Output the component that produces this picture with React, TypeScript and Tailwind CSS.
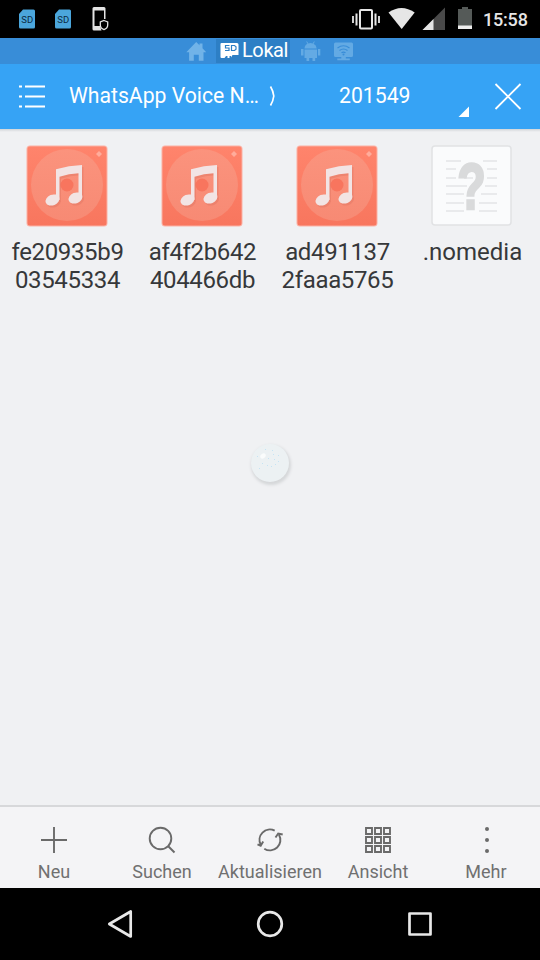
import type { ReactNode } from 'react'

const files = [
  { lines: ['fe20935b9', '03545334'], type: 'audio' },
  { lines: ['af4f2b642', '404466db'], type: 'audio' },
  { lines: ['ad491137', '2faaa5765'], type: 'audio' },
  { lines: ['.nomedia'], type: 'unknown' },
]

function SdCardIcon() {
  return (
    <svg width="18" height="20" viewBox="0 0 18 20">
      <path d="M5 .5h10.500q1.500 0 1.500 1.500v16q0 1.500-1.500 1.500h-13q-1.500 0-1.500-1.500V5z" fill="#4ba6dc" />
      <text x="9.200" y="13.500" textAnchor="middle" fontSize="9.500" fill="#0b2c44">SD</text>
    </svg>
  )
}

function StatusBar() {
  return (
    <div className="flex h-[38px] items-center bg-black pl-[18px] pr-3">
      <SdCardIcon />
      <div className="ml-[18px]">
        <SdCardIcon />
      </div>
      <svg className="ml-[20px]" width="18" height="26" viewBox="92 6 18 26">
        <path d="M94 7h10q1.500 0 1.500 1.500V19h-1.500V10.500H94.500V26H100l1.500 4.500H94q-1.500 0-1.500-1.500V8.500Q92.500 7 94 7z" fill="#e4e4e4" />
        <path d="M104 20.500l3.700 1.500v3c0 2.200-1.500 3.800-3.700 4.600-2.200-.8-3.700-2.400-3.700-4.600v-3z" fill="#000" stroke="#e4e4e4" strokeWidth="1.300" />
      </svg>
      <div className="ml-auto flex items-center">
        <svg width="134" height="30" viewBox="350 4 134 30">
          <g fill="none" stroke="#e6e6e6">
            <rect x="360" y="10" width="12" height="18.500" rx="1" strokeWidth="2" />
            <path d="M356.500 13.500v12M375.500 13.500v12" strokeWidth="2" />
            <path d="M353 16v7M379 16v7" strokeWidth="1.800" />
          </g>
          <path d="M388.500 12.500Q401.500 3.500 414.700 12.500L401.700 29z" fill="#e6e6e6" />
          <path d="M445 7.500V30h-22.500z" fill="#4a4a4a" />
          <path d="M433.500 19v11h-11z" fill="#e6e6e6" />
          <path d="M458 9h4V7h6v2h4v20h-14z" fill="#555a58" />
          <path d="M458 25.500h14V29h-14z" fill="#eee" />
        </svg>
        <span className="-ml-px w-[45px] pt-[2px] whitespace-nowrap text-[18px] leading-[36px] font-medium tracking-[-0.2px] text-[#e6e6e6]">15:58</span>
      </div>
    </div>
  )
}

function TabStrip() {
  return (
    <div className="flex h-[26px] items-center bg-[#388dd8] pl-[186px]">
      <svg width="20" height="20" viewBox="186 41 20 20" fill="#71b3e8">
        <path d="M196.200 42l3.300 3.300V43.500h3v4.800l3.700 3.900h-2.700v8.600h-4.700v-6h-5v6h-4.700v-8.600h-2.800z" />
      </svg>
      <div className="ml-[10px] flex h-6 w-[74px] items-center bg-[#2d7fc5] pl-[4px]">
        <svg width="20" height="16" viewBox="0 0 20 16">
          <path d="M1.500 0H17q1.500 0 1.500 1.500V12H12.500L11 14.500V13H9.500V15H7.500V13H6L4.500 15H1.500Q.5 15 .5 14V1Q.5 0 1.500 0z" fill="#fff" />
          <path d="M9.500 2.500H5.500V5H9V7.500H5M11.500 2.500h3l1.500 1.200v2.600l-1.500 1.200h-3z" fill="none" stroke="#2d7fc5" strokeWidth="1.200" />
        </svg>
        <span className="ml-[2px] pb-[2px] text-[20px] leading-6 tracking-[-0.4px] text-white">Lokal</span>
      </div>
      <svg className="ml-[10px]" width="60" height="22" viewBox="300 40 60 22" fill="#63aae4">
        <path d="M304.500 48.500q.3-3.700 3-4.700l-1.300-2 .7-.5 1.500 2.100q2.100-.6 4.200 0l1.500-2.100.7.500-1.300 2q2.900 1.200 3.200 4.700zM304.500 49.500h12.500v8.500H304.500zM301 49h2.500v6.500H301zM318 49h2.300v6.500H318zM306.500 57.500h2.700v3.500h-2.700zM312.500 57.500h2.700v3.500h-2.700z" />
        <path d="M335.500 42.500h16q1.500 0 1.500 1.500v11.500q0 1.500-1.500 1.500h-5.700v1.500h4v1.700h-12.500v-1.700h4V57h-5.800q-1.500 0-1.500-1.500V44q0-1.500 1.500-1.500z" />
        <g fill="none" stroke="#388dd8" strokeWidth="1.200">
          <path d="M337.500 48q6-4.500 12 0M339.500 50.500q4-3 8 0M341.500 52.800q2-1.500 4 0" />
        </g>
        <circle cx="343.500" cy="54.500" r="1" fill="#388dd8" />
      </svg>
    </div>
  )
}

function Header() {
  return (
    <div className="flex h-[65px] items-center bg-[#36a3f5] text-[21.2px] text-white">
      <svg className="ml-[18px] shrink-0" width="28" height="26" viewBox="18 83.500 28 26">
        <path d="M19 86h3M25 86h20M19 96h3M25 96h20M19 106h3M25 106h20" stroke="#fff" strokeWidth="2" />
      </svg>
      <span className="ml-[23px] w-[190px] pb-[2px] whitespace-nowrap">WhatsApp Voice N…</span>
      <svg className="ml-[10px] mb-[2px] shrink-0" width="8" height="22" viewBox="0 0 8 22">
        <path d="M1.500 1.500Q4.200 6 4.800 11Q4.200 16 1.500 20.500" fill="none" stroke="#fff" strokeWidth="1.700" />
      </svg>
      <span className="ml-[62px] pb-[2px]">201549</span>
      <svg className="ml-auto mr-[18px] shrink-0" width="66" height="40" viewBox="456 76.500 66 40">
        <path d="M469 106v11.500h-11.500z" fill="#fff" />
        <path d="M495.500 83.500l25 25M520.500 83.500l-25 25" stroke="#fff" strokeWidth="1.800" />
      </svg>
    </div>
  )
}

function AudioIcon() {
  return (
    <svg className="mr-[2px]" width="82" height="82" viewBox="-1 -1 82 82">
      <defs>
        <linearGradient id="cover" x1="0" y1="0" x2="0" y2="1">
          <stop offset="0" stopColor="#ff846c" />
          <stop offset="1" stopColor="#f8765e" />
        </linearGradient>
        <linearGradient id="disc" x1="0" y1="0" x2="0" y2="1">
          <stop offset="0" stopColor="#fb937d" />
          <stop offset="1" stopColor="#f78a74" />
        </linearGradient>
      </defs>
      <rect x="-.5" y="-.5" width="81" height="81" rx="3.500" fill="#fbb1a4" />
      <rect x=".5" y=".5" width="79" height="79" rx="2.500" fill="url(#cover)" />
      <circle cx="40" cy="39" r="36" fill="url(#disc)" />
      <circle cx="40" cy="39" r="6.500" fill="#f8755e" />
      <path d="M72 5l3 3-3 3-3-3z" fill="#ffac9b" />
      <g fill="#d96e5c" opacity=".35" transform="translate(1.500 2)">
        <path d="M29 23.300Q42 19.300 55 19v33.500h-3.500V27.300Q42 27.500 32.500 30.700V54h-3.500z" />
        <ellipse cx="25.500" cy="54" rx="7.200" ry="5.300" transform="rotate(-22 25.500 54)" />
        <ellipse cx="48.500" cy="52" rx="7.200" ry="5.300" transform="rotate(-22 48.500 52)" />
      </g>
      <g fill="#f2e4e4">
        <path d="M29 23.300Q42 19.300 55 19v33.500h-3.500V27.300Q42 27.500 32.500 30.700V54h-3.500z" />
        <ellipse cx="25.500" cy="54" rx="7.200" ry="5.300" transform="rotate(-22 25.500 54)" />
        <ellipse cx="48.500" cy="52" rx="7.200" ry="5.300" transform="rotate(-22 48.500 52)" />
      </g>
    </svg>
  )
}

function UnknownIcon() {
  return (
    <svg className="mr-px" width="82" height="82" viewBox="-1 -1 82 82">
      <rect x="0" y="0" width="79" height="79" rx="3" fill="#fafbfc" stroke="#e1e2e4" strokeWidth="1.500" />
      <path
        d="M14 15h15M51 15h14M14 23h10M55 23h10M14 32h10M55 32h10M32 32h9M14 40h21M53 40h12M14 48h18M49 48h16M14 57h18M47 57h18M14 65h18M47 65h18"
        stroke="#e9eaec"
        strokeWidth="1.800"
      />
      <text
        className="font-['Liberation_Sans',sans-serif]"
        transform="translate(39.500 63) scale(.72 1)"
        textAnchor="middle"
        fontSize="65"
        fontWeight="700"
        fill="#d9dadb"
        stroke="#d9dadb"
        strokeWidth="2.500"
      >
        ?
      </text>
    </svg>
  )
}

function FileGrid() {
  return (
    <div className="flex flex-1 flex-col bg-[#f0f1f3]">
      <div className="h-[3px] bg-linear-to-b from-[#d2d5d8] to-[#f0f1f3]" />
      <div className="grid grid-cols-4 pt-[13px]">
        {files.map((file) => (
          <div key={file.lines[0]} className="flex flex-col items-center">
            {file.type === 'audio' ? <AudioIcon /> : <UnknownIcon />}
            <div className={`mt-[11px] text-center text-[24px] leading-7 text-[#36383a] ${file.type === 'audio' ? 'tracking-[-0.35px]' : ''}`}>
              {file.lines.map((line) => (
                <div key={line}>{line}</div>
              ))}
            </div>
          </div>
        ))}
      </div>
      {/* floating bubble */}
      <div className="mx-auto mt-auto mb-[323px] size-[38px] rounded-full bg-[#ecf1f3] shadow-[1px_2px_3px_1px_#d5d7d9]">
        <svg width="38" height="38" viewBox="0 0 38 38">
          <ellipse cx="12" cy="12" rx="3" ry="2.200" fill="#fafcfc" transform="rotate(-40 12 12)" />
          <g fill="#c5e4f4">
            <path d="M14 5h1v1h-1zM21 6h1v1h-1zM27 11h1v1h-1zM22 10h1v1h-1zM6 12h1v1h-1zM17 14h1v1h-1zM23 15h1v1h-1zM11 19h1v1h-1zM16 21h1v1h-1zM27 17h1v1h-1zM8 24h1v1h-1zM20 22h1v1h-1zM24 20h1v1h-1z" />
          </g>
        </svg>
      </div>
    </div>
  )
}

function ToolbarButton({ label, children }: { label: string; children: ReactNode }) {
  return (
    <div className="flex flex-1 flex-col items-center pt-[18px]">
      <svg width="30" height="30" viewBox="-15 -15 30 30" fill="none" stroke="#6a6a6a" strokeWidth="1.900">
        {children}
      </svg>
      <span className="mt-[5px] text-[18px] leading-6 text-[#707070]">{label}</span>
    </div>
  )
}

function Toolbar() {
  return (
    <div className="flex h-[83px] border-t-2 border-[#d7d8da] bg-[#f4f4f6]">
      <ToolbarButton label="Neu">
        <path d="M-13 0h26M0-13v26" />
      </ToolbarButton>
      <ToolbarButton label="Suchen">
        <circle cx="-1.500" cy="-1.500" r="10.800" />
        <path d="M6 6l6.500 6.500" />
      </ToolbarButton>
      <ToolbarButton label="Aktualisieren">
        <path d="M4.700-9.300A10.400 10.400 0 0 0-9.300 4.800M-12.500 4.300l3.200 1.400 2.500-4.200M-5.700 8.700A10.400 10.400 0 0 0 9-5.200M5.500-2.500l2.700-4 4.500 1" />
      </ToolbarButton>
      <ToolbarButton label="Ansicht">
        <path d="M-12-12h6v6h-6zM-3-12h6v6h-6zM6-12h6v6h-6zM-12-3h6v6h-6zM-3-3h6v6h-6zM6-3h6v6h-6zM-12 6h6v6h-6zM-3 6h6v6h-6zM6 6h6v6h-6z" />
      </ToolbarButton>
      <ToolbarButton label="Mehr">
        <g fill="#6a6a6a" stroke="none">
          <circle cx="1" cy="-11" r="2" />
          <circle cx="1" cy="0" r="2" />
          <circle cx="1" cy="11" r="2" />
        </g>
      </ToolbarButton>
    </div>
  )
}

function NavBar() {
  return (
    <div className="flex h-[72px] items-center justify-center bg-black">
      <svg width="360" height="40" viewBox="90 904 360 40" fill="none" stroke="#e8e8e8" strokeWidth="2.700" strokeLinejoin="round">
        <path d="M130.700 911.500v25L109.300 924z" />
        <circle cx="270" cy="924" r="11.800" />
        <rect x="409.500" y="913.500" width="21" height="21" />
      </svg>
    </div>
  )
}

export default function App() {
  return (
    <div className="flex h-[960px] w-[540px] flex-col overflow-hidden font-['Roboto','Noto_Sans',sans-serif]">
      <StatusBar />
      <TabStrip />
      <Header />
      <FileGrid />
      <Toolbar />
      <NavBar />
    </div>
  )
}
